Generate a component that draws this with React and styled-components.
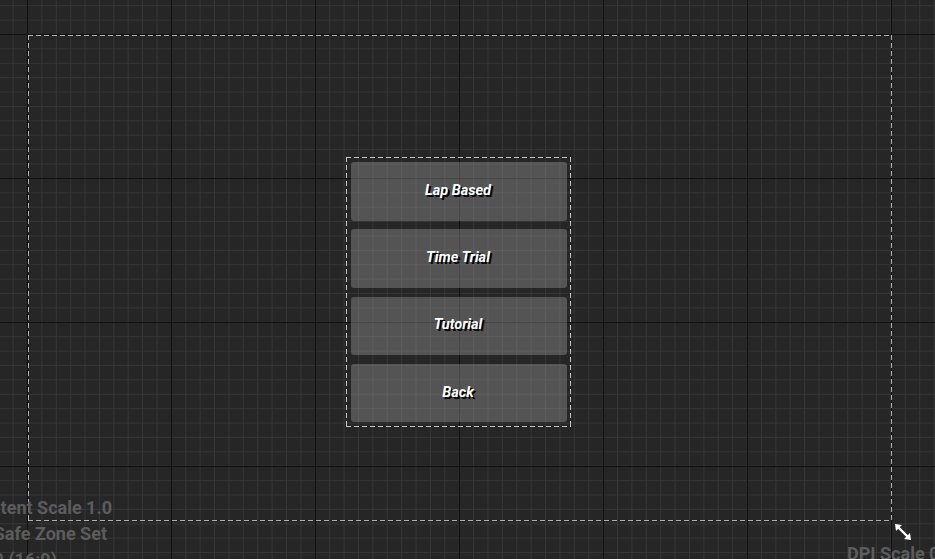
import React from 'react';
import styled, { createGlobalStyle } from 'styled-components';

const Global = createGlobalStyle`
  html, body { margin: 0; padding: 0; background: #262626; }
  body { font-family: Roboto, "Liberation Sans", sans-serif; overflow: hidden; }
`;

const dashed = (c) => `
  background-image:
    repeating-linear-gradient(to right, ${c} 0 5px, transparent 5px 8px),
    repeating-linear-gradient(to right, ${c} 0 5px, transparent 5px 8px),
    repeating-linear-gradient(to bottom, ${c} 0 5px, transparent 5px 8px),
    repeating-linear-gradient(to bottom, ${c} 0 5px, transparent 5px 8px);
  background-size: 100% 1px, 100% 1px, 1px 100%, 1px 100%;
  background-position: left top, left bottom, left top, right top;
  background-repeat: no-repeat;
`;

const Canvas = styled.div`
  position: relative;
  width: 935px;
  height: 559px;
  overflow: hidden;
  box-sizing: border-box;
  padding: 35px 0 0 28px;
  background-color: #262626;
  background-image:
    linear-gradient(to right, #101010 1px, transparent 1px),
    linear-gradient(to bottom, #101010 1px, transparent 1px),
    linear-gradient(to right, #363636 1px, transparent 1px),
    linear-gradient(to bottom, #363636 1px, transparent 1px);
  background-size: 144px 144px, 144px 144px, 14.4px 14.4px, 14.4px 14.4px;
  background-position: 27px 0, 0 34px, 27px 0, 0 34px;
`;

const Frame = styled.div`
  width: 864px;
  height: 486px;
  box-sizing: border-box;
  padding: 122px 0 0 318px;
  ${dashed('rgba(200, 200, 200, 0.85)')}
`;

const ButtonStack = styled.div`
  width: 225px;
  height: 270px;
  box-sizing: border-box;
  padding: 5px 4px 0 5px;
  display: flex;
  flex-direction: column;
  gap: 8.8px;
  ${dashed('rgba(215, 215, 215, 0.9)')}
`;

const MenuButton = styled.div`
  height: 58.5px;
  flex: none;
  border-radius: 3px;
  background: rgba(160, 160, 160, 0.38);
  display: flex;
  align-items: center;
  justify-content: center;
  font-family: Roboto, "Liberation Sans", sans-serif;
  font-style: italic;
  font-weight: 700;
  font-size: 14.5px;
  color: #ffffff;
  text-shadow: 2px 2px 0 #000000;
  padding: 0 2px 2px 0;
  box-sizing: border-box;
`;

const InfoBlock = styled.div`
  position: absolute;
  top: 495px;
  right: 823px;
  display: flex;
  flex-direction: column;
  align-items: flex-end;
  white-space: nowrap;
`;

const InfoLine = styled.div`
  font-family: Roboto, "Liberation Sans", sans-serif;
  font-weight: 700;
  font-size: 18px;
  line-height: 26px;
  color: #5c5c5c;
  padding-right: ${p => p.$pad || 0}px;
`;

const DpiLabel = styled(InfoLine)`
  position: absolute;
  top: 541px;
  left: 847px;
  white-space: nowrap;
`;

const ResizeHandle = styled.svg`
  position: absolute;
  left: 893px;
  top: 522px;
  width: 20px;
  height: 20px;
`;

export default function App() {
  const items = ['Lap Based', 'Time Trial', 'Tutorial', 'Back'];
  return (
    <>
      <Global />
      <Canvas>
        <Frame>
          <ButtonStack>
            {items.map(t => (
              <MenuButton key={t}>{t}</MenuButton>
            ))}
          </ButtonStack>
        </Frame>
        <InfoBlock>
          <InfoLine>Device Content Scale 1.0</InfoLine>
          <InfoLine $pad={5}>No Safe Zone Set</InfoLine>
          <InfoLine $pad={55}>1920 x 1080 (16:9)</InfoLine>
        </InfoBlock>
        <DpiLabel>DPI Scale 0.45</DpiLabel>
        <ResizeHandle viewBox="0 0 20 20">
          <path d="M4 4 L16 16" stroke="#fff" strokeWidth="2.4" strokeLinecap="butt" />
          <path d="M2 2 L9 3 L3 9 Z" fill="#fff" />
          <path d="M18 18 L11 17 L17 11 Z" fill="#fff" />
        </ResizeHandle>
      </Canvas>
    </>
  );
}
